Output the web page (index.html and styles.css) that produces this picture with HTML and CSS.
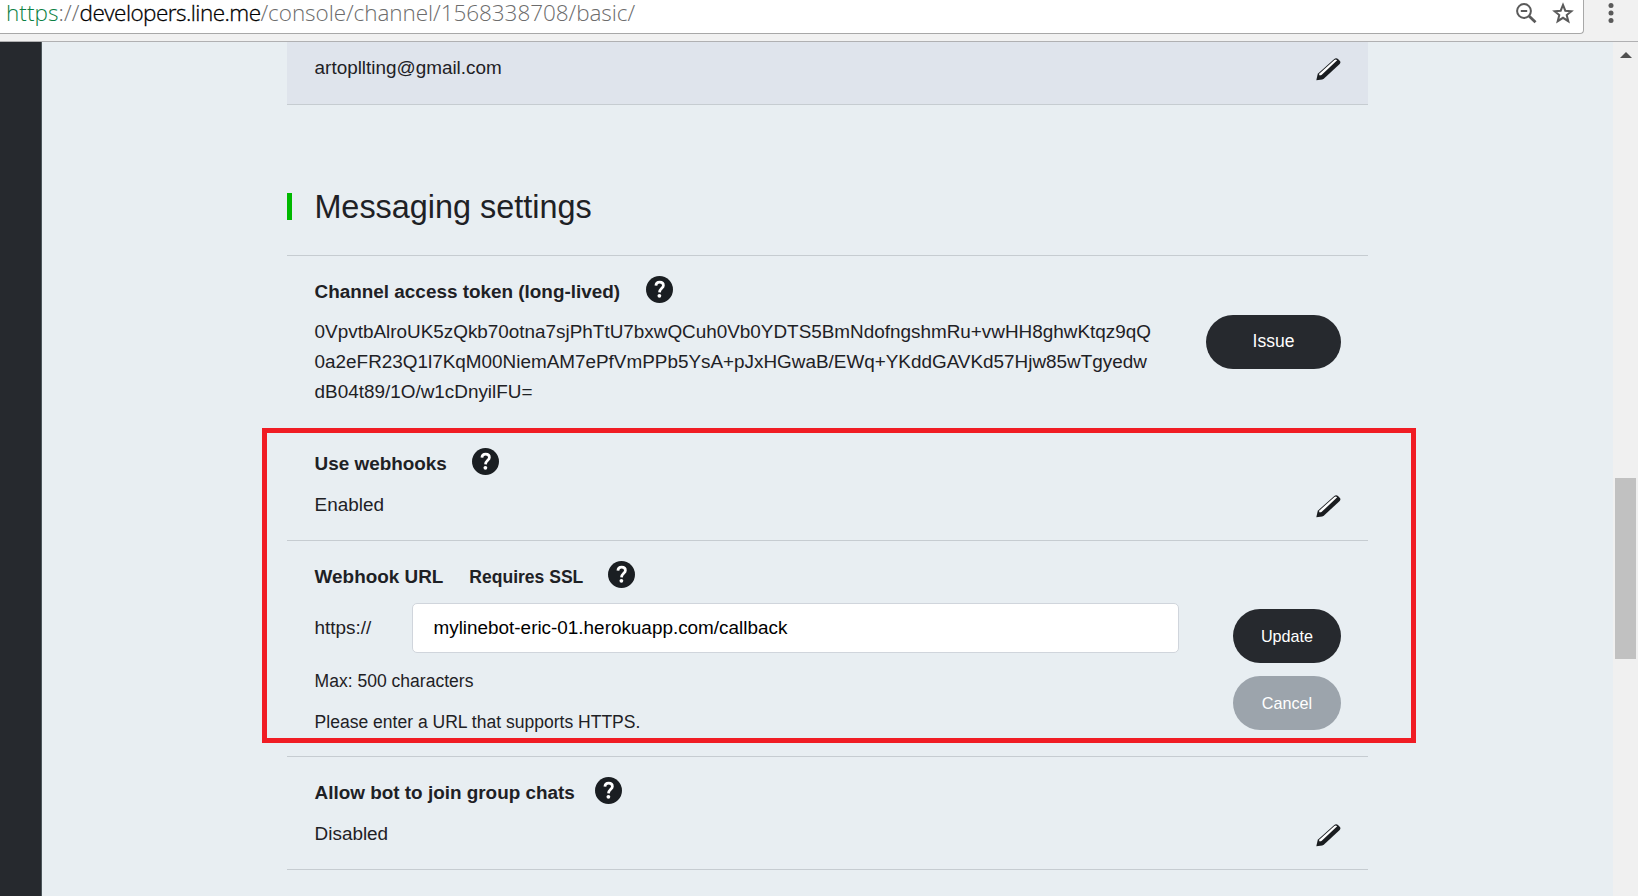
FILE: index.html
```html
<!DOCTYPE html>
<html lang="en">
<head>
<meta charset="utf-8">
<title>Channel settings</title>
<link rel="stylesheet" href="styles.css">
</head>
<body>
<svg class="defs" width="0" height="0" aria-hidden="true">
  <symbol id="pencil" viewBox="0 0 25 23">
    <path d="M.3 22.200 1.800 15.700 18.300.9Q20.200-.5 22 1L23.700 2.700Q25.200 4.300 23.700 5.900L8.300 20.300 6.300 21.500Z" fill="#1a1d20"/>
    <path d="M2.900 15.900 18.400 1.900Q19.900.9 21.200 2.200L5.500 17.100 3.700 17.500Z" fill="#fff"/>
  </symbol>
  <symbol id="help" viewBox="0 0 27 27">
    <circle cx="13.5" cy="13.5" r="13.5" fill="#1a1e22"/>
    <path d="M9.900 9.600C10 7.200 11.500 6.200 13.700 6.200 15.900 6.200 17.400 7.400 17.400 9.400 17.400 12.200 13.600 12.500 13.500 16.400" fill="none" stroke="#fff" stroke-width="2.700"/>
    <circle cx="13.4" cy="19.800" r="1.900" fill="#fff"/>
  </symbol>
</svg>
<header class="toolbar">
  <div class="address">
    <div class="url"><span class="scheme">https</span><span class="slashes">://</span><span class="host">developers.line.me</span>/console/channel/1568338708/basic/</div>
    <svg class="zoom-icon" width="21" height="21" viewBox="0 0 21 21" fill="none" stroke="#5a5a5a" stroke-width="2"><circle cx="8" cy="8" r="6.900"/><path d="M4.800 8h6.400"/><path d="m13 13 6.500 6.300" stroke-width="2.800"/></svg>
    <svg class="star-icon" width="22" height="22" viewBox="0 0 22 22" fill="none" stroke="#5a5a5a" stroke-width="2"><path d="m11 2.900 2.300 5.800 6.100.5-4.700 3.900 1.600 6.100-5.300-3.400-5.300 3.400 1.600-6.100-4.700-3.900 6.100-.5z"/></svg>
  </div>
  <svg class="menu-icon" width="6" height="22" viewBox="0 0 6 22" fill="#5a5a5a"><circle cx="3" cy="3.500" r="2.500"/><circle cx="3" cy="11" r="2.500"/><circle cx="3" cy="18.500" r="2.500"/></svg>
</header>
<div class="viewport">
  <aside class="sidebar"></aside>
  <main class="content">
    <section class="card">
      <span class="value">artopllting@gmail.com</span>
      <svg class="pencil"><use href="#pencil"/></svg>
    </section>
    <h1 class="heading"><span class="mark"></span>Messaging settings</h1>
    <section class="row token">
      <h2 class="title">Channel access token (long-lived)<svg class="help"><use href="#help"/></svg></h2>
      <div class="line">
        <div class="value">0VpvtbAlroUK5zQkb70otna7sjPhTtU7bxwQCuh0Vb0YDTS5BmNdofngshmRu+vwHH8ghwKtqz9qQ<br>0a2eFR23Q1l7KqM00NiemAM7ePfVmPPb5YsA+pJxHGwaB/EWq+YKddGAVKd57Hjw85wTgyedw<br>dB04t89/1O/w1cDnyilFU=</div>
        <button class="button issue">Issue</button>
      </div>
    </section>
    <section class="row hooks">
      <h2 class="title">Use webhooks<svg class="help"><use href="#help"/></svg></h2>
      <div class="line">
        <span class="value">Enabled</span>
        <svg class="pencil"><use href="#pencil"/></svg>
      </div>
    </section>
    <section class="row webhook">
      <h2 class="title">Webhook URL<span class="note">Requires SSL</span><svg class="help"><use href="#help"/></svg></h2>
      <div class="form">
        <div class="fields">
          <div class="field">
            <label class="value" for="hook">https://</label>
            <input class="input" id="hook" value="mylinebot-eric-01.herokuapp.com/callback">
          </div>
          <p class="hint">Max: 500 characters</p>
          <p class="hint">Please enter a URL that supports HTTPS.</p>
        </div>
        <div class="actions">
          <button class="button">Update</button>
          <button class="button cancel">Cancel</button>
        </div>
      </div>
    </section>
    <section class="row">
      <h2 class="title tight">Allow bot to join group chats<svg class="help"><use href="#help"/></svg></h2>
      <div class="line">
        <span class="value">Disabled</span>
        <svg class="pencil"><use href="#pencil"/></svg>
      </div>
    </section>
    <div class="highlight"></div>
  </main>
  <div class="scrollbar">
    <svg class="arrow" width="12" height="6" viewBox="0 0 12 6"><path d="M0 6 6 0l6 6z" fill="#505050"/></svg>
    <div class="thumb"></div>
  </div>
</div>
</body>
</html>
```
FILE: styles.css
```css
* { box-sizing: border-box; }
body {
  margin: 0;
  height: 896px;
  overflow: hidden;
  display: flex;
  flex-direction: column;
  font-family: "Liberation Sans", Arial, sans-serif;
  font-size: 18.9px;
  line-height: 30px;
  color: #1e2125;
  background: #e8eef2;
}
.defs { position: absolute; }
.toolbar {
  flex: none;
  height: 42px;
  display: flex;
  align-items: flex-start;
  background: #f1f1f1;
  border-bottom: 1px solid #b0b0b2;
}
.address {
  width: 1584px;
  height: 34px;
  display: flex;
  align-items: flex-start;
  padding-left: 6px;
  background: #fff;
  border: solid #a8a8a8;
  border-width: 0 1px 1px 0;
  border-bottom-right-radius: 4px;
}
.url {
  flex: 1;
  height: 33px;
  margin-top: -2px;
  font-family: "Open Sans", sans-serif;
  font-weight: 300;
  font-size: 22.5px;
  letter-spacing: -0.06px;
  white-space: nowrap;
  color: #6c6c6c;
}
.scheme { color: #0b8043; }
.scheme, .slashes { letter-spacing: 0.08px; }
.host { color: #000; letter-spacing: -0.53px; -webkit-text-stroke: 0.3px #000; }
.zoom-icon { margin: 3px 15px 0 0; }
.star-icon { margin: 2px 9px 0 0; }
.menu-icon { margin: 2px 0 0 24px; }
.viewport { flex: 1; display: flex; min-height: 0; }
.sidebar { width: 42px; background: #26292e; border-right: 1px solid #4c565b; }
.content { position: relative; width: 1081px; margin: 0 245px; }
.card {
  height: 63px;
  display: flex;
  justify-content: space-between;
  align-items: flex-start;
  padding: 11px 27px 0 27.6px;
  background: #dfe4ec;
  border-bottom: 1px solid #c6ccd1;
}
.pencil { flex: none; width: 25px; height: 23px; margin-top: 5px; }
.heading {
  display: flex;
  align-items: center;
  height: 151px;
  margin: 0;
  padding-top: 77px;
  padding-bottom: 24px;
  font-weight: 400;
  font-size: 32.4px;
  border-bottom: 1px solid #c6ccd1;
}
.mark { width: 5px; height: 27px; margin-right: 22.4px; background: #00b900; }
.row {
  padding: 21px 27px 20px 27.6px;
  border-bottom: 1px solid #c6ccd1;
}
.token { padding-bottom: 21px; }
.hooks { padding-top: 20px; }
.title {
  display: flex;
  align-items: center;
  height: 30px;
  margin: 0 0 11px;
  font-size: 18.9px;
  font-weight: 700;
}
.token .title, .webhook .title { margin-bottom: 10px; }
.help { width: 27px; height: 27px; margin: -5px 0 0 25.5px; }
.tight .help { margin-left: 20px; }
.note { margin-left: 26px; font-size: 17.55px; }
.note + .help { margin-left: 24.8px; }
.line { display: flex; justify-content: space-between; align-items: flex-start; }
.value { white-space: nowrap; }
.button {
  flex: none;
  width: 108px;
  height: 54px;
  padding: 0;
  border: 0;
  border-radius: 27px;
  font: 16.2px "Liberation Sans", Arial, sans-serif;
  color: #fff;
  background: #26292e;
}
.issue { width: 135px; font-size: 17.55px; padding-bottom: 1px; margin-top: -2px; }
.cancel { background: #9ca4ac; }
.webhook { height: 216px; }
.form { display: flex; justify-content: space-between; }
.fields { width: 864.4px; margin-top: 1px; }
.field { display: flex; align-items: center; justify-content: space-between; }
.input {
  width: 767px;
  height: 50px;
  padding: 0 20.5px;
  border: 1px solid #d0d5dc;
  border-radius: 5px;
  font: inherit;
  color: #000;
  background: #fff;
}
.hint { margin: 13px 0 0; line-height: 28px; font-size: 17.55px; }
.field + .hint { margin-top: 14px; }
.actions { display: flex; flex-direction: column; gap: 13px; margin-top: 7px; }
.highlight {
  position: absolute;
  left: -25px;
  top: 386px;
  width: 1154px;
  height: 315px;
  border: 5px solid #f01c24;
}
.scrollbar { flex: 1; padding: 10px 2px 0; background: #f0f0f0; }
.arrow { display: block; margin-left: 5px; }
.thumb { height: 181px; margin-top: 420px; background: #c1c1c1; }
```
